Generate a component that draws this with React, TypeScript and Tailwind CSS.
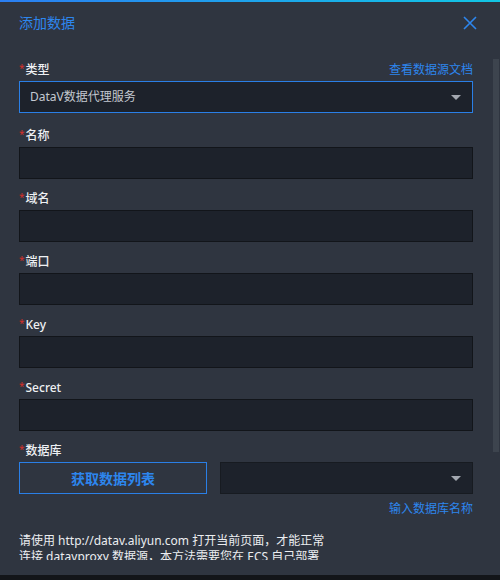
const font = { fontFamily: '"Noto Sans", "Noto Sans CJK SC", sans-serif' };

const Label: React.FC<{ text: string }> = ({ text }) => (
    <div className="flex h-[18px] items-end text-[12px] leading-[16px] text-[#eef0f3]">
        <span className="mr-[1px] self-start pt-[2px] text-[10px] leading-[12px] text-[#d3302b]">*</span>
        <span className="font-medium">{text}</span>
    </div>
);

const Caret: React.FC = () => (
    <span className="h-0 w-0 border-x-[5px] border-t-[5px] border-x-transparent border-t-[#a3a8b0]" />
);

const Field: React.FC<{ label: string }> = ({ label }) => (
    <div className="mb-[10px]">
        <Label text={label} />
        <div className="mt-[3px] h-[32px] border border-[#12151a] bg-[#1d222b]" />
    </div>
);

const App: React.FC = () => {
    return (
        <div className="h-[580px] w-[500px] overflow-hidden bg-[#131519]" style={font}>
            <div className="flex h-[575px] flex-col bg-[#2f3540] pb-[15px]">
                <div className="h-[2px] bg-gradient-to-r from-[#2b7ef2] to-[#12c6e4]" />
                <div className="flex h-[57px] shrink-0 items-start justify-between pl-[19px] pr-[23px] pt-[11px]">
                    <h1 className="text-[14px] leading-[20px] text-[#2d86ee]">添加数据</h1>
                    <svg width="14" height="14" viewBox="0 0 14 14" className="mt-[3px]">
                        <path d="M1 1L13 13M13 1L1 13" stroke="#2d86ee" strokeWidth="1.6" />
                    </svg>
                </div>
                <div className="flex min-h-0 flex-1">
                    <div className="flex-1 overflow-hidden pl-[19px] pr-[20px] pt-[1px]">
                        <div className="mb-[13px]">
                            <div className="flex items-end justify-between">
                                <Label text="类型" />
                                <span className="text-[12px] leading-[16px] text-[#2d86ee]">查看数据源文档</span>
                            </div>
                            <div className="mt-[3px] flex h-[32px] items-center justify-between border border-[#2a7fe6] bg-[#1d222b] pl-[10px] pr-[11px]">
                                <span className="text-[12px] text-[#c3c8d0]">DataV数据代理服务</span>
                                <Caret />
                            </div>
                        </div>
                        <Field label="名称" />
                        <Field label="域名" />
                        <Field label="端口" />
                        <Field label="Key" />
                        <Field label="Secret" />
                        <div>
                            <Label text="数据库" />
                            <div className="mt-[3px] flex gap-[13px]">
                                <button className="h-[32px] w-[188px] border border-[#2a7fe6] text-[14px] font-bold text-[#2d86ee]">
                                    获取数据列表
                                </button>
                                <div className="flex h-[32px] flex-1 items-center justify-end border border-[#171b21] bg-[#1d222b] pr-[11px]">
                                    <Caret />
                                </div>
                            </div>
                            <div className="mt-[7px] text-right text-[12px] leading-[16px] text-[#2d86ee]">输入数据库名称</div>
                        </div>
                        <p className="mt-[16px] w-[314px] text-[12px] leading-[16px] text-[#eceef1]">
                            请使用 http://datav.aliyun.com 打开当前页面，才能正常连接 datavproxy 数据源，本方法需要您在 ECS 自己部署 datavproxy 服务，详见文档说明。
                        </p>
                    </div>
                    <div className="w-[7px]">
                        <div className="h-[393px] w-[6px] bg-[#3d444e]" />
                    </div>
                </div>
            </div>
        </div>
    );
};

export default App;
